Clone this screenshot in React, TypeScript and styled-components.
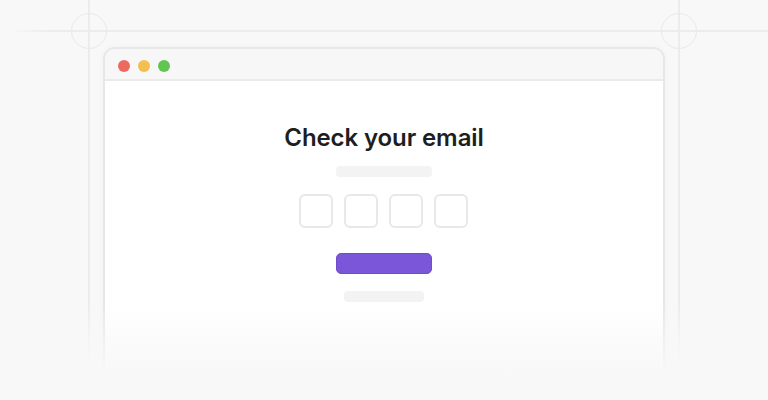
import React from "react";
import styled, { createGlobalStyle } from "styled-components";

const Global = createGlobalStyle`
  html, body { margin: 0; padding: 0; background: #f8f8f8; }
  #root { width: 768px; height: 400px; }
`;

const Stage = styled.div`
  position: relative;
  width: 768px;
  height: 400px;
  overflow: hidden;
  background: #f8f8f8;
  box-sizing: border-box;
  padding: 47px 0 0 103px;
  font-family: Inter, "Noto Sans", sans-serif;
`;

const HGuide = styled.div`
  position: absolute;
  top: 30px;
  left: 0;
  right: 0;
  height: 2px;
  background: linear-gradient(to right, rgba(234,234,234,0) 10px, #ececec 50px, #ececec 100%);
`;

const VGuide = styled.div<{ $x: number }>`
  position: absolute;
  top: 0;
  left: ${(p) => p.$x}px;
  width: 2px;
  height: 390px;
  background: linear-gradient(to bottom, #ececec 0%, #ececec 80%, rgba(236,236,236,0) 100%);
`;

const Ring = styled.div<{ $x: number }>`
  position: absolute;
  top: 13px;
  left: ${(p) => p.$x - 18}px;
  width: 36px;
  height: 36px;
  box-sizing: border-box;
  border-radius: 50%;
  border: 1.5px solid #e9e9e9;
`;

const Window = styled.div`
  position: relative;
  width: 562px;
  height: 360px;
  box-sizing: border-box;
  background: #ffffff;
  border: 2px solid #e7e7e7;
  border-bottom: none;
  border-radius: 12px 12px 0 0;
  box-shadow: 0 0 6px rgba(0, 0, 0, 0.03);
  display: flex;
  flex-direction: column;
  overflow: hidden;
`;

const TitleBar = styled.div`
  height: 32px;
  flex: none;
  box-sizing: border-box;
  background: #f7f7f7;
  border-bottom: 2px solid #ebebeb;
  display: flex;
  align-items: center;
  gap: 8px;
  padding: 4px 0 0 13px;
`;

const Dot = styled.span<{ $c: string }>`
  width: 12px;
  height: 12px;
  border-radius: 50%;
  background: ${(p) => p.$c};
`;

const Content = styled.div`
  display: flex;
  flex-direction: column;
  align-items: center;
  padding-top: 42px;
`;

const Title = styled.h1`
  margin: 0;
  font-family: Inter, "Noto Sans", sans-serif;
  font-weight: 600;
  font-size: 24px;
  line-height: 30px;
  color: #1e1e21;
  letter-spacing: -0.1px;
`;

const Bar = styled.div<{ $w: number; $mt: number }>`
  width: ${(p) => p.$w}px;
  height: 11px;
  margin-top: ${(p) => p.$mt}px;
  border-radius: 4px;
  background: #f3f3f3;
`;

const CodeRow = styled.div`
  display: flex;
  gap: 11px;
  margin-top: 17px;
  margin-right: 1px;
`;

const CodeBox = styled.div`
  width: 34px;
  height: 34px;
  box-sizing: border-box;
  border: 2px solid #e8e8e8;
  border-radius: 6px;
  background: #fff;
`;

const Button = styled.div`
  width: 96px;
  height: 21px;
  margin-top: 25px;
  box-sizing: border-box;
  border-radius: 5px;
  background: #7b56d8;
  border: 1px solid #6f4ccb;
`;

const Fade = styled.div`
  position: absolute;
  left: 0;
  right: 0;
  bottom: 0;
  height: 95px;
  background: linear-gradient(
    to bottom,
    rgba(248, 248, 248, 0) 0%,
    rgba(248, 248, 248, 0.6) 40%,
    #f8f8f8 75%,
    #f8f8f8 100%
  );
`;

export default function App() {
  return (
    <>
      <Global />
      <Stage>
        <HGuide />
        <VGuide $x={88} />
        <VGuide $x={678} />
        <Ring $x={89} />
        <Ring $x={679} />
        <Window>
          <TitleBar>
            <Dot $c="#ec6a5e" />
            <Dot $c="#f4bf4f" />
            <Dot $c="#61c554" />
          </TitleBar>
          <Content>
            <Title>Check your email</Title>
            <Bar $w={96} $mt={13} />
            <CodeRow>
              <CodeBox />
              <CodeBox />
              <CodeBox />
              <CodeBox />
            </CodeRow>
            <Button />
            <Bar $w={80} $mt={17} />
          </Content>
        </Window>
        <Fade />
      </Stage>
    </>
  );
}
